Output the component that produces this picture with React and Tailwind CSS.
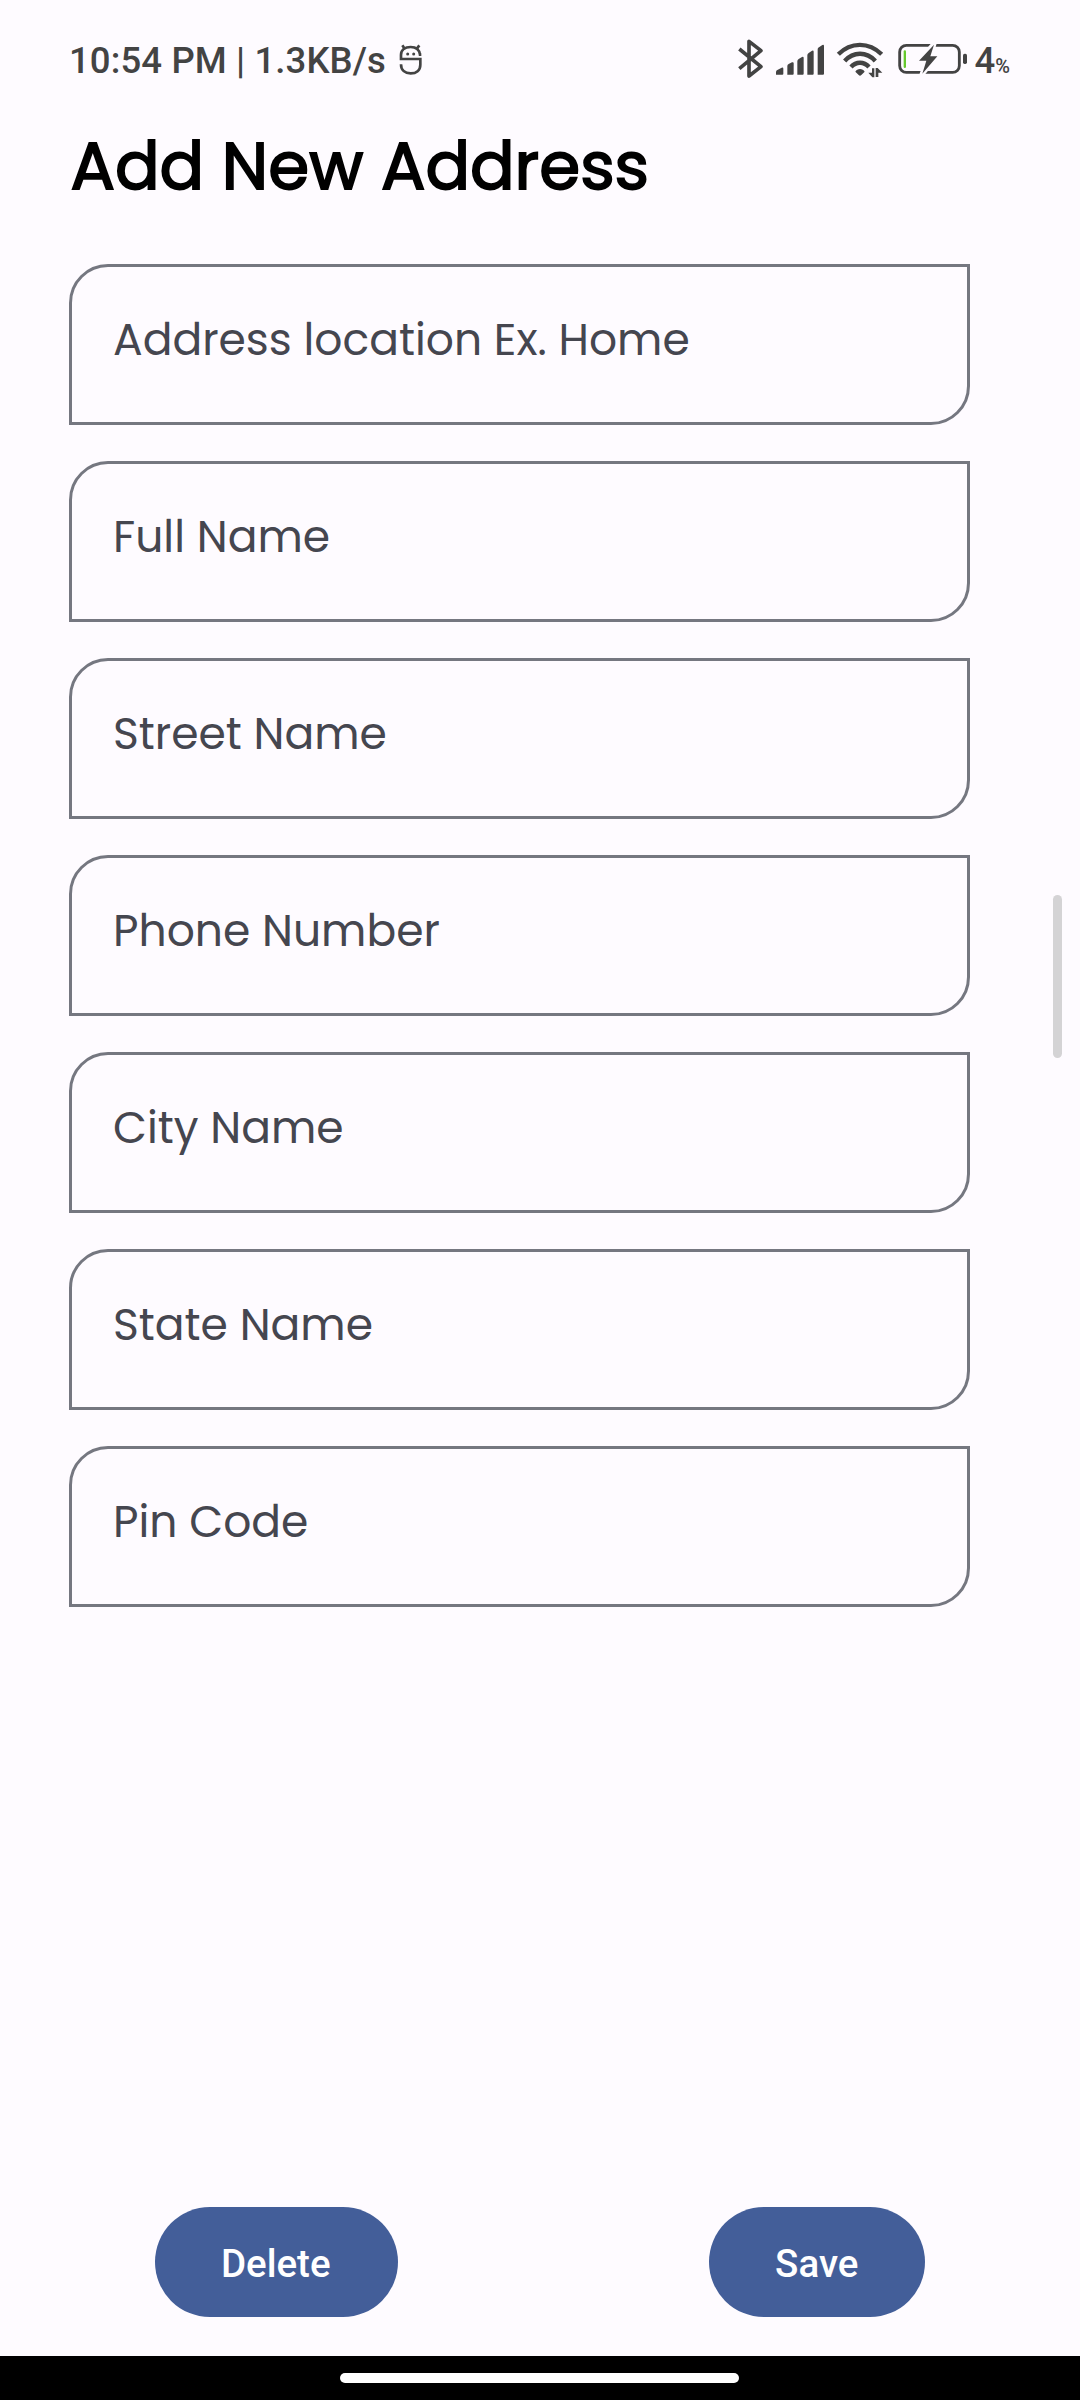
const fields = [
  "Address location Ex. Home",
  "Full Name",
  "Street Name",
  "Phone Number",
  "City Name",
  "State Name",
  "Pin Code",
];

function FaceIcon() {
  return (
    <svg className="-mt-[4px] ml-[13px] h-[31px] w-[23px]" viewBox="1048 70 69 93" fill="none" stroke="#434343" strokeWidth="8">
      <path d="M1115 102H1111C1109 86 1097 79 1083 79C1066 79 1054 88 1054 103V115H1112V132C1112 149 1100 158 1083 158C1066 158 1054 149 1054 131" />
      <path d="M1066 86L1058 74M1100 86L1109 74" />
      <circle cx="1074" cy="100" r="4.5" fill="#434343" stroke="none" />
      <circle cx="1092" cy="100" r="4.5" fill="#434343" stroke="none" />
    </svg>
  );
}

function StatusIcons() {
  return (
    <svg className="-mt-[2px] h-[42px] w-[229px]" viewBox="0 0 687 126" fill="#434343">
      <g transform="translate(-54 -57)">
        <path d="M58 87L123 140L87 168V64L123 92L58 146" fill="none" stroke="#434343" strokeWidth="11" strokeLinejoin="round" />
        <path d="M168 164V156Q168 152 172 150L185 143Q190 141 190 146V161Q190 164 187 164Z" />
        <path d="M202 164V138Q202 134 206 132L216 127Q221 125 221 130V161Q221 164 218 164Z" />
        <path d="M232 164V124Q232 119 236 117L246 111Q251 109 251 114V161Q251 164 248 164Z" />
        <path d="M262 164V106Q262 101 266 99L276 92Q281 90 281 95V161Q281 164 278 164Z" />
        <path d="M293 164V88Q293 84 297 82L307 75Q312 73 312 78V161Q312 164 309 164Z" />
        <g fill="none" stroke="#434343" strokeWidth="13">
          <path d="M355 103C392 65 447 65 485 103" />
          <path d="M374 123C400 94 440 94 466 123" />
          <path d="M393 141C408 124 432 124 447 141" />
        </g>
        <path d="M406 155C411 144 429 144 434 155L424 165Q420 169 416 165Z" />
        <path d="M456 145H463V172H457L445 158H456Z" />
        <path d="M467 171V144H473L487 158H475V171Z" />
        <rect x="539" y="76" width="179" height="81" rx="20" fill="none" stroke="#434343" strokeWidth="8.5" />
        <rect x="551" y="91" width="7" height="53" rx="3.5" fill="#66c92d" />
        <path d="M644 68L597 122H619L604 166L652 109H632Z" stroke="#fefbff" strokeWidth="13" />
        <path d="M642 74L597 122H619L607 161L652 109H631Z" />
        <rect x="729" y="101" width="12" height="31" rx="5" />
      </g>
    </svg>
  );
}

export default function App() {
  return (
    <div className="flex h-[2400px] w-[1080px] flex-col bg-[#fefbff]">
      <header className="flex h-[120px] items-center justify-between pt-[2px] pl-[69px] pr-[70px] font-[Roboto,sans-serif] text-[#434343]">
        <div className="flex items-center">
          <span className="text-[36.5px] font-medium tracking-[0.12px]">10:54 PM | 1.3KB/s</span>
          <FaceIcon />
        </div>
        <div className="flex items-center">
          <StatusIcons />
          <div className="ml-[8px] flex items-baseline">
            <span className="text-[36.5px] font-medium">4</span>
            <span className="text-[20px] font-medium">%</span>
          </div>
        </div>
      </header>
      <main className="flex flex-1 justify-between pl-[69px] pr-[18px]">
        <div className="w-[901px]">
          <h1 className="h-[144px] pl-[1.5px] font-[Poppins,sans-serif] text-[66px] leading-[92px] text-black [-webkit-text-stroke:1.8px_black]">
            Add New Address
          </h1>
          <form className="flex flex-col gap-9">
            {fields.map((label) => (
              <div
                key={label}
                className="h-[161px] rounded-tl-[39px] rounded-br-[39px] border-3 border-[#757780] pt-[40px] pl-[41px] font-[Poppins,sans-serif] text-[44px] leading-[66px] text-[#45464f]"
              >
                {label}
              </div>
            ))}
          </form>
        </div>
        <div className="mt-[775px] h-[163px] w-[9px] rounded-full bg-[#d4d3d5]" />
      </main>
      <div className="flex justify-around pb-[39px] font-[Roboto,sans-serif] text-[38.5px] font-medium text-white">
        <button className="h-[110px] w-[243px] rounded-full bg-[#435e99] pt-[3px] pr-[2px]">Delete</button>
        <button className="h-[110px] w-[216px] rounded-full bg-[#435e99] pt-[3px]">Save</button>
      </div>
      <footer className="flex h-[44px] justify-center bg-black pt-[17px]">
        <div className="mr-px h-[10px] w-[399px] rounded-full bg-white" />
      </footer>
    </div>
  );
}
